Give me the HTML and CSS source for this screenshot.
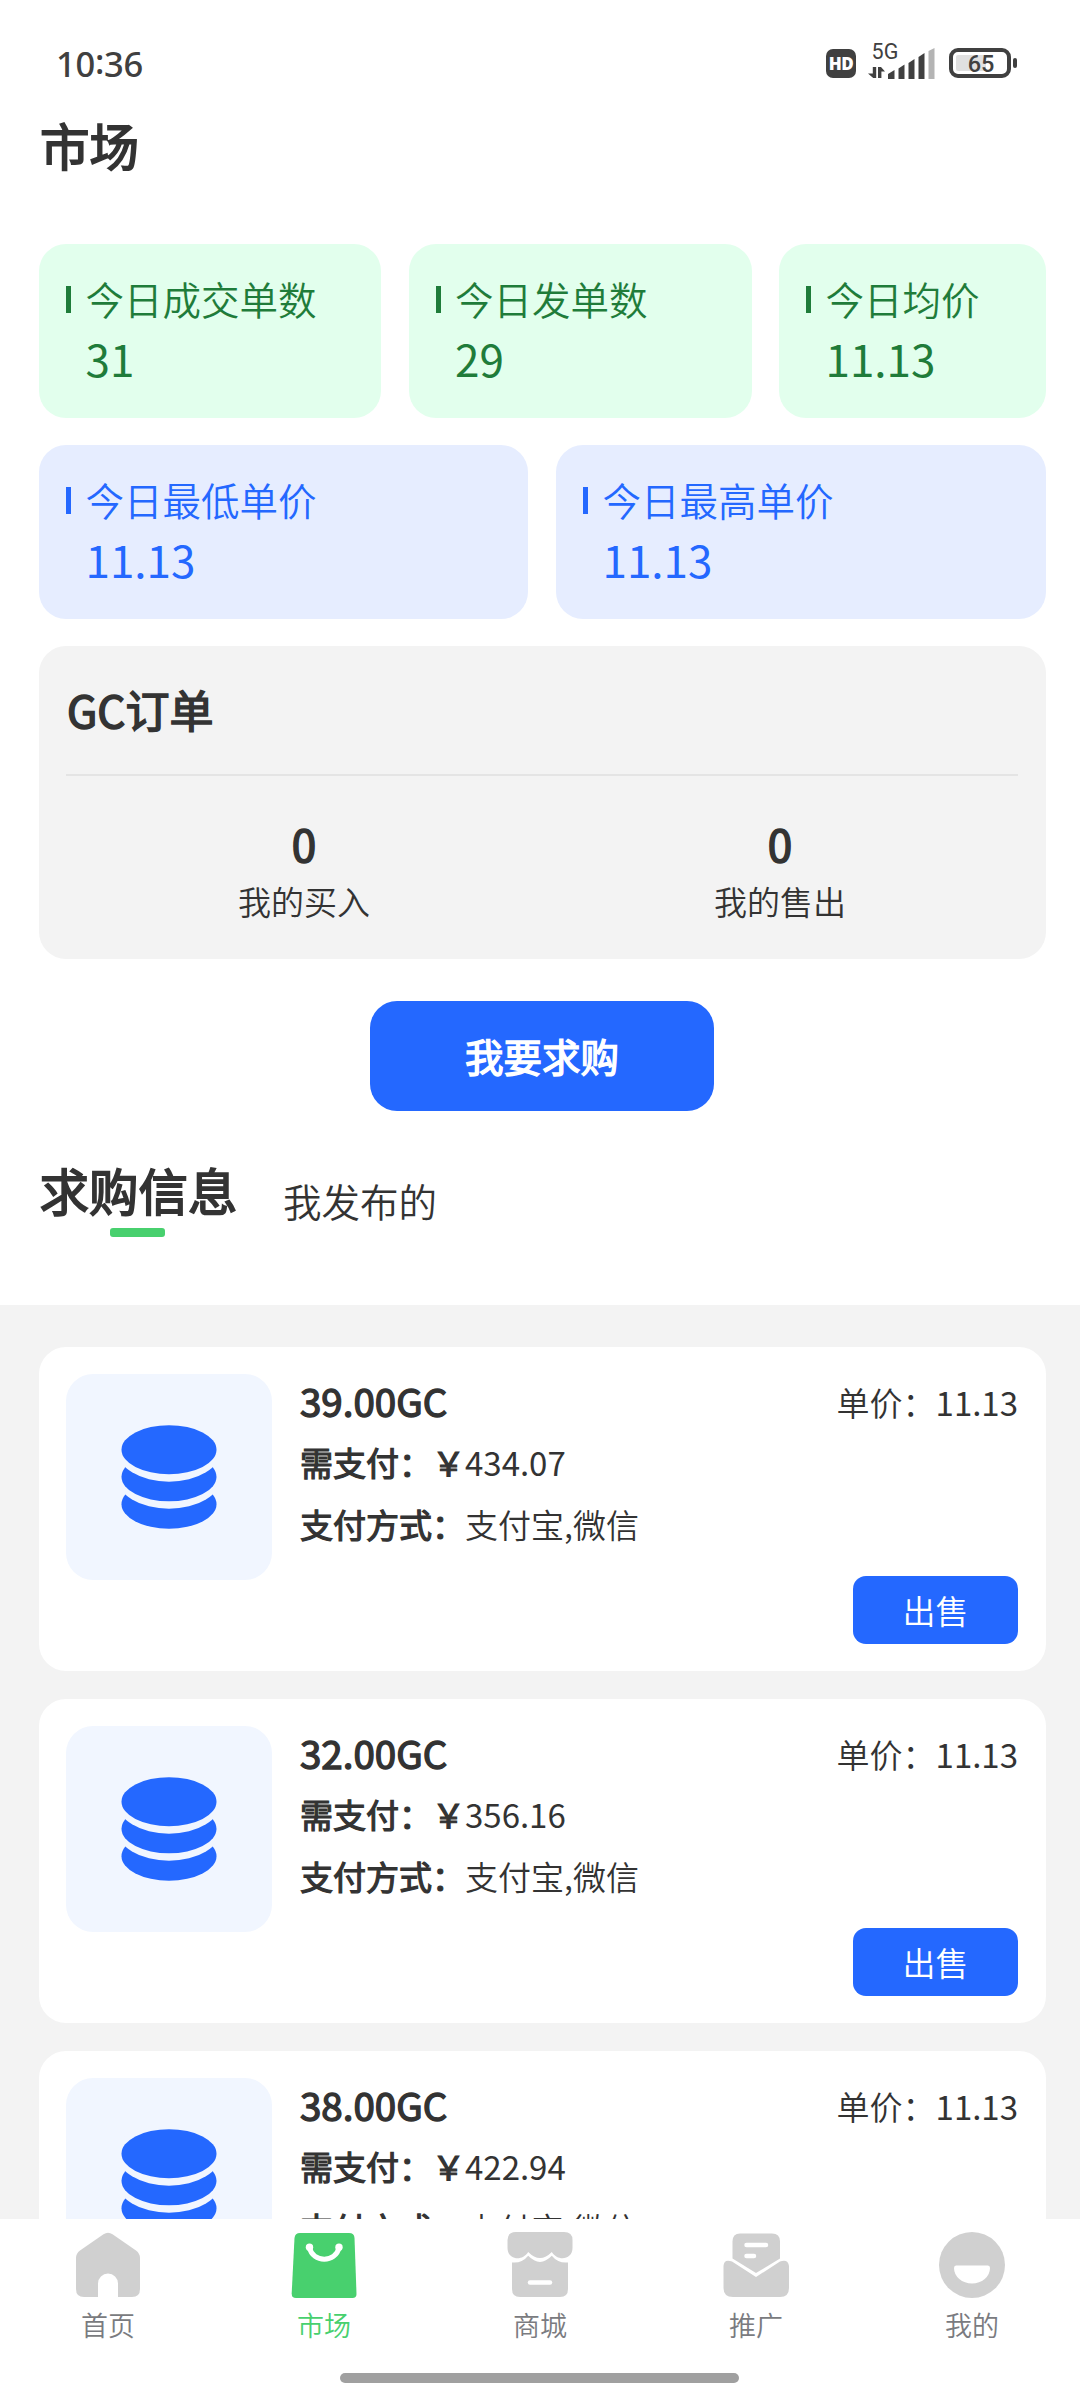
FILE: index.html
```html
<!DOCTYPE html>
<html lang="zh-CN">
<head>
<meta charset="utf-8">
<title>市场</title>
<link rel="stylesheet" href="styles.css">
</head>
<body>
<svg class="defs" width="0" height="0">
  <symbol id="coins" viewBox="0 0 96 104">
    <ellipse class="coin" cx="48" cy="79.2" rx="47.5" ry="24.5"/>
    <ellipse class="coin-gap" cx="48" cy="51.8" rx="52.2" ry="32"/>
    <ellipse class="coin" cx="48" cy="51.8" rx="47.5" ry="24.5"/>
    <ellipse class="coin-gap" cx="48" cy="24.7" rx="52.2" ry="32"/>
    <ellipse class="coin" cx="48" cy="24.7" rx="47.5" ry="24.5"/>
  </symbol>
</svg>
<div class="screen">
  <header class="status">
    <span class="clock">10<span class="colon">:</span>36</span>
    <div class="status-icons">
      <span class="hd">HD</span>
      <svg class="signal" width="68" height="43" viewBox="868 36 68 43">
        <text class="net" x="871.5" y="59.3" textLength="27">5G</text>
        <path class="ink" d="M872.8 67h3.4v11h-3l-5.2-4.6h4.8zM878 67h3l4 4.400h-3.600v6.600h-3.400z"/>
        <path class="ink" d="M888 74l6.500-4v9h-6.500zM898.500 68.500l6-4v14.500h-6zM908.500 63l6-4v20h-6zM918.500 57l6-4v26h-6z"/>
        <path class="dim" d="M928.500 51l6-3v31h-6z"/>
      </svg>
      <div class="battery"><span class="charge">65</span></div>
    </div>
  </header>
  <main class="content">
    <h1 class="title">市场</h1>
    <section class="stats">
      <div class="row row-3">
        <div class="stat green"><div class="label">今日成交单数</div><div class="value">31</div></div>
        <div class="stat green"><div class="label">今日发单数</div><div class="value">29</div></div>
        <div class="stat green"><div class="label">今日均价</div><div class="value">11.13</div></div>
      </div>
      <div class="row row-2">
        <div class="stat blue"><div class="label">今日最低单价</div><div class="value">11.13</div></div>
        <div class="stat blue"><div class="label">今日最高单价</div><div class="value">11.13</div></div>
      </div>
    </section>
    <section class="orders">
      <h2 class="orders-title">GC订单</h2>
      <div class="orders-row">
        <div class="order"><b class="count">0</b><span class="order-label">我的买入</span></div>
        <div class="order"><b class="count">0</b><span class="order-label">我的售出</span></div>
      </div>
    </section>
    <button class="buy">我要求购</button>
    <div class="tabs">
      <div class="tab active">求购信息</div>
      <div class="tab">我发布的</div>
    </div>
    <section class="list">
      <article class="item">
        <div class="thumb"><svg class="coins"><use href="#coins"/></svg></div>
        <div class="info">
          <div class="head"><b class="amount">39.00GC</b><span class="price">单价：<span class="num">11.13</span></span></div>
          <div class="line"><b class="key">需支付：￥</b><span class="num">434.07</span></div>
          <div class="line"><b class="key">支付方式：</b>支付宝,微信</div>
          <button class="sell">出售</button>
        </div>
      </article>
      <article class="item">
        <div class="thumb"><svg class="coins"><use href="#coins"/></svg></div>
        <div class="info">
          <div class="head"><b class="amount">32.00GC</b><span class="price">单价：<span class="num">11.13</span></span></div>
          <div class="line"><b class="key">需支付：￥</b><span class="num">356.16</span></div>
          <div class="line"><b class="key">支付方式：</b>支付宝,微信</div>
          <button class="sell">出售</button>
        </div>
      </article>
      <article class="item">
        <div class="thumb"><svg class="coins"><use href="#coins"/></svg></div>
        <div class="info">
          <div class="head"><b class="amount">38.00GC</b><span class="price">单价：<span class="num">11.13</span></span></div>
          <div class="line"><b class="key">需支付：￥</b><span class="num">422.94</span></div>
          <div class="line"><b class="key">支付方式：</b>支付宝,微信</div>
        </div>
      </article>
    </section>
  </main>
  <nav class="nav">
    <div class="nav-items">
      <a class="nav-item">
        <svg class="nav-icon" viewBox="0 0 66 66"><path class="fill" d="M28.500 2.200Q33 -.8 37.500 2.200L61 18.500Q65 21.500 65 26V57Q65 65 57 65H43V51.500A10 10 0 0 0 23 51.500V65H9Q1 65 1 57V26Q1 21.500 5 18.500Z"/></svg>
        <span>首页</span>
      </a>
      <a class="nav-item on">
        <svg class="nav-icon" viewBox="0 0 66 66"><path class="fill" d="M9 1H58Q63.300 1 63.500 6L65.500 62Q65.500 66 61.500 66H5Q.500 66 .700 61L3.500 6Q4 1 9 1Z"/><path class="cut" stroke-width="5" d="M18.500 15.500C21.500 31 45 31 48 15.500"/><circle class="hole" cx="18.500" cy="15.300" r="3.700"/><circle class="hole" cx="48" cy="15.300" r="3.700"/></svg>
        <span>市场</span>
      </a>
      <a class="nav-item">
        <svg class="nav-icon" viewBox="0 0 66 66"><path class="fill" d="M9 0H57Q65.500 0 65.500 8V16C65.500 27.500 51 30 44.800 20Q33 32 21.200 20C15 30 .500 27.500 .500 16V8Q.500 0 9 0Z"/><path class="fill" d="M5 30.500Q15 31.500 21.200 23.800Q33 36 44.800 23.800Q51 31.500 61 30.500V57Q61 65 53 65H13Q5 65 5 57Z"/><path class="cut" stroke-width="4.500" d="M23 50.500H43"/></svg>
        <span>商城</span>
      </a>
      <a class="nav-item">
        <svg class="nav-icon" viewBox="0 0 66 66"><path class="fill" d="M17 1.500H49Q57 1.500 57 9.500V26.500L33 41L9.500 26.500V9.500Q9.500 1.500 17 1.500Z"/><path class="fill" d="M.500 34Q1 26.500 9 29.500L33 45L57 29.500Q65 26.500 66 34V56Q66 65 57 65H10Q.500 65 .500 56Z"/><path class="cut" stroke-width="4.500" d="M23.500 13H43M23.500 24H31"/></svg>
        <span>推广</span>
      </a>
      <a class="nav-item">
        <svg class="nav-icon" viewBox="0 0 66 66"><circle class="fill" cx="33" cy="33" r="33"/><path class="hole" d="M17 33.500H49Q51 33.500 51 36A18 15.500 0 0 1 15 36Q15 33.500 17 33.500Z"/></svg>
        <span>我的</span>
      </a>
    </div>
    <div class="home-bar"></div>
  </nav>
</div>
</body>
</html>
```
FILE: styles.css
```css
* { box-sizing: border-box; }
body { margin: 0; background: #fff; color: #333; font-family: "Noto Sans CJK SC", sans-serif; font-weight: 350; }
h1, h2 { margin: 0; }
b, h1, h2, .buy, .tab.active { font-weight: 400; -webkit-text-stroke: 0.036em currentColor; }
.value, .num { font-weight: 400; }
button { border: 0; padding: 0; font-family: inherit; font-weight: inherit; color: #fff; background: #2468ff; }
.defs { display: none; }
.screen { width: 1080px; height: 2400px; display: flex; flex-direction: column; overflow: hidden; }

.status { flex: none; height: 108px; padding: 43px 69px 0 56px; display: flex; justify-content: space-between; align-items: flex-start; color: #404040; }
.clock { font: 500 34.500px/42px "Noto Sans", sans-serif; letter-spacing: -0.300px; }
.colon { position: relative; top: -3px; }
.status-icons { display: flex; align-items: flex-start; }
.hd { width: 30px; height: 29px; margin: 5.500px 12px 0 0; border-radius: 7px; background: #404040; color: #fff; font: 800 17px/29px "Open Sans", sans-serif; text-align: center; letter-spacing: -0.500px; }
.signal { margin: -7px 13px 0 0; }
.net { font: 400 21.500px Roboto, sans-serif; fill: #404040; }
.ink { fill: #404040; }
.dim { fill: #b4b4b4; }
.battery { position: relative; width: 62px; height: 30px; margin-top: 5px; padding: 3px; border: 4px solid #404040; border-radius: 9px; }
.battery::after { content: ""; position: absolute; left: 60px; top: 6px; width: 4px; height: 10px; border-radius: 2px; background: #404040; }
.charge { display: block; height: 16px; border-radius: 2px; background: linear-gradient(90deg, #e0e0e0 62%, #fff 62%); font: 500 23.500px/18px Roboto, sans-serif; text-align: center; padding-left: 2px; }

.content { flex: 1; min-height: 0; overflow: hidden; display: flex; flex-direction: column; }
.title { flex: none; height: 136px; padding: 1px 0 0 40px; font-size: 49.500px; line-height: 72px; }
.stats { flex: none; margin: 0 34px 0 39px; display: grid; gap: 27px; }
.row { display: grid; height: 174px; }
.row-3 { grid-template-columns: 342px 343px 267px; gap: 27.500px; }
.row-2 { grid-template-columns: 489px 490px; gap: 28px; }
.stat { padding: 27px; border-radius: 27px; }
.green { background: #e2ffed; color: #1f7c3a; }
.blue { background: #e6edff; color: #2468ff; }
.label { display: flex; align-items: center; gap: 14.500px; font-size: 38.500px; line-height: 55px; }
.label::before { content: ""; width: 5px; height: 27px; margin-top: 1px; background: currentColor; }
.value { padding-left: 19.500px; font-size: 44px; line-height: 64px; }

.orders { flex: none; height: 313px; margin: 27px 34px 0 39px; padding: 31px 28px 0 27px; border-radius: 27px; background: #f3f3f3; }
.orders-title { height: 99px; padding-left: 1px; border-bottom: 2px solid #e4e4e4; font-size: 44px; line-height: 64px; }
.orders-row { padding-top: 35px; display: grid; grid-template-columns: 1fr 1fr; }
.order { display: flex; flex-direction: column; align-items: center; gap: 2px; }
.count { font-size: 44px; line-height: 64px; }
.order-label { font-size: 33px; line-height: 48px; }

.buy { flex: none; width: 344px; height: 110px; margin: 42px 0 0 370px; border-radius: 27px; padding-bottom: 2px; font-size: 38.500px; line-height: 108px; }
.tabs { flex: none; height: 194px; padding: 43px 39px 0 39.500px; display: flex; gap: 45.500px; align-items: flex-start; }
.tab { margin-top: 18px; font-size: 38.500px; line-height: 56px; }
.tab.active { margin-top: 0; font-size: 49.500px; line-height: 72px; }
.tab.active::after { content: ""; display: block; width: 55px; height: 9px; margin: 2px 0 0 70.500px; border-radius: 3px; background: #48d06e; }

.list { flex: none; padding: 42px 34px 28px 39px; display: grid; gap: 28px; background: #f3f3f3; }
.item { height: 324px; padding: 27px 28px 27px 27px; display: flex; gap: 28px; border-radius: 27px; background: #fff; }
.thumb { width: 206px; height: 206px; display: grid; place-items: center; border-radius: 27px; background: #f1f6ff; }
.coins { width: 96px; height: 104px; }
.coin { fill: #2468ff; }
.coin-gap { fill: #f1f6ff; }
.info { flex: 1; display: flex; flex-direction: column; font-size: 33px; line-height: 48px; }
.head { height: 64px; display: flex; justify-content: space-between; }
.amount { font-size: 38.500px; line-height: 52px; }
.price { line-height: 56px; }
.line { height: 62px; }
.sell { width: 165px; height: 68px; margin: 14px 0 0 auto; border-radius: 13px; font-size: 33px; line-height: 67px; }

.nav { flex: none; height: 181px; padding-top: 13px; background: #fff; }
.nav-items { display: grid; grid-template-columns: repeat(5, 1fr); }
.nav-item { display: flex; flex-direction: column; align-items: center; gap: 7px; color: #7a7b80; font-size: 27px; line-height: 40px; }
.nav-item.on { color: #48d06e; }
.nav-icon { width: 66px; height: 66px; }
.fill { fill: #d0d0d0; }
.on .fill { fill: #48d06e; }
.hole { fill: #fff; }
.cut { fill: none; stroke: #fff; stroke-linecap: round; }
.home-bar { width: 399px; height: 10px; margin: 28px 0 0 340px; border-radius: 5px; background: #a0a0a0; }
```
